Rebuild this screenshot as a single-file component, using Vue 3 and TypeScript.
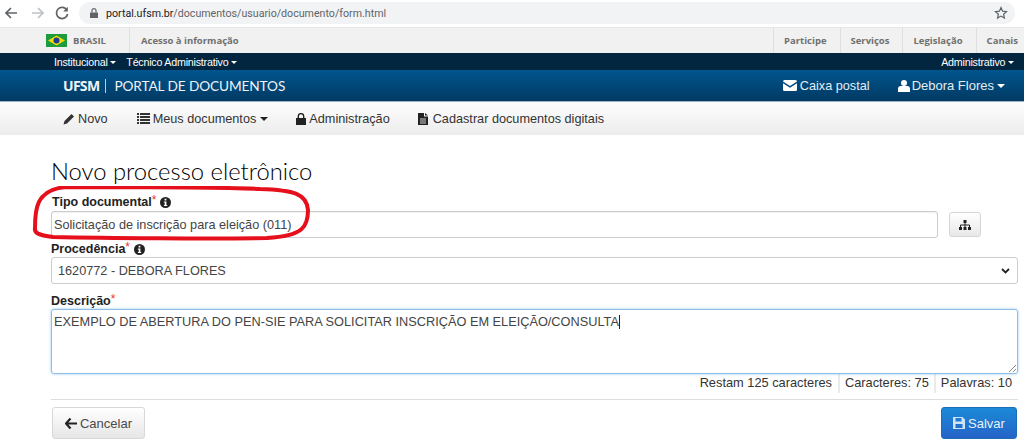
<script setup lang="ts">
const topLinks: string[] = ['Participe', 'Serviços', 'Legislação', 'Canais']
const counters: string[] = ['Restam 125 caracteres', 'Caracteres: 75', 'Palavras: 10']
</script>

<template>
  <div class="page">
    <header class="chrome">
      <svg class="ci" width="16" height="16" viewBox="0 0 16 16"><path d="M14 8H3M8 3L3 8l5 5" fill="none" stroke="#5f6368" stroke-width="1.7"/></svg>
      <svg class="ci fwd" width="16" height="16" viewBox="0 0 16 16"><path d="M2 8h11M8 3l5 5-5 5" fill="none" stroke="#bdc1c6" stroke-width="1.7"/></svg>
      <svg class="ci reload" width="16" height="16" viewBox="0 0 16 16"><path d="M13 5.2A5.6 5.6 0 1 0 13.6 9" fill="none" stroke="#5f6368" stroke-width="1.7"/><path d="M13.8 1.8v4.6H9.2z" fill="#5f6368"/></svg>
      <div class="omni">
        <svg width="10" height="12" viewBox="0 0 10 12"><path d="M1 5.5h8V11H1z" fill="#5f6368"/><path d="M3 5.5V3.6a2 2 0 0 1 4 0v1.9" fill="none" stroke="#5f6368" stroke-width="1.2"/></svg>
        <span class="url"><b>portal.ufsm.br</b>/documentos/usuario/documento/form.html</span>
        <svg class="star" width="14" height="14" viewBox="0 0 14 14"><path d="M7 1.6l1.6 3.6 3.9.4-2.9 2.6.8 3.9L7 10.1l-3.4 2 .8-3.9L1.500 5.600l3.900-.4z" fill="none" stroke="#5f6368" stroke-width="1.2"/></svg>
      </div>
    </header>

    <div class="gov">
      <div class="brasil">
        <svg width="21" height="13" viewBox="0 0 21 13"><rect width="21" height="13" fill="#1c9c3c"/><path d="M10.500 1.500L19 6.500l-8.500 5-8.500-5z" fill="#f5d90a"/><circle cx="10.500" cy="6.500" r="3" fill="#1d3d8f"/></svg>
        <span>BRASIL</span>
      </div>
      <span class="acesso">Acesso à informação</span>
      <nav class="gov-links">
        <a v-for="l in topLinks" :key="l">{{ l }}</a>
      </nav>
    </div>

    <div class="dark">
      <span class="dd">Institucional <i class="caret small"></i></span>
      <span class="dd">Técnico Administrativo <i class="caret small"></i></span>
      <span class="dd end">Administrativo <i class="caret small"></i></span>
    </div>

    <div class="blue">
      <div class="brand"><strong>UFSM</strong><em></em><span>PORTAL DE DOCUMENTOS</span></div>
      <div class="blue-right">
        <span class="bi">
          <svg width="14" height="11" viewBox="0 0 14 11"><path d="M0 1.500Q0 0 1.500 0h11Q14 0 14 1.500L7 6z" fill="#fff"/><path d="M0 3.200L7 7.800l7-4.600v6.300q0 1.500-1.500 1.500h-11Q0 11 0 9.500z" fill="#fff"/></svg>
          Caixa postal
        </span>
        <span class="bi user">
          <svg width="12" height="12" viewBox="0 0 12 12"><circle cx="6" cy="3" r="3" fill="#fff"/><path d="M0 12V9q0-3 3-3h6q3 0 3 3v3z" fill="#fff"/></svg>
          Debora Flores <i class="caret"></i>
        </span>
      </div>
    </div>

    <nav class="menu">
      <a class="m1">
        <svg width="12" height="12" viewBox="0 0 12 12"><path d="M8.500 1l2.500 2.500L4 10.500 0.500 11.500 1.500 8z" fill="#333"/></svg>
        Novo
      </a>
      <a class="m2">
        <svg width="13" height="11" viewBox="0 0 13 11"><path d="M0 0h2v2H0zM3 0h10v2H3zM0 3h2v2H0zM3 3h10v2H3zM0 6h2v2H0zM3 6h10v2H3zM0 9h2v2H0zM3 9h10v2H3z" fill="#333"/></svg>
        Meus documentos <i class="caret dark-caret"></i>
      </a>
      <a class="m3">
        <svg width="10" height="12" viewBox="0 0 10 12"><path d="M0 5h10v7H0z" fill="#222"/><path d="M2.300 5V3.300a2.700 2.700 0 0 1 5.400 0V5" fill="none" stroke="#222" stroke-width="1.400"/></svg>
        Administração
      </a>
      <a class="m4">
        <svg width="10" height="12" viewBox="0 0 10 12"><path d="M0 0h6v3.500h4V12H0z" fill="#222"/><path d="M7 0l3 2.600H7z" fill="#222"/><path d="M2 6h6M2 8h6M2 10h6" stroke="#fff" stroke-width=".8"/></svg>
        Cadastrar documentos digitais
      </a>
    </nav>

    <main class="content">
      <h1>Novo processo eletrônico</h1>

      <label class="lbl first">Tipo documental<sup>*</sup>
        <svg class="info" width="11" height="11" viewBox="0 0 11 11"><circle cx="5.500" cy="5.500" r="5.500" fill="#222"/><path d="M4.600 1.800h1.800v1.600H4.600zM3.900 4.400h2.500v3.500h.8v1.200H3.900V7.900h.8V5.600h-.8z" fill="#fff"/></svg>
      </label>
      <div class="row">
        <div class="field">Solicitação de inscrição para eleição (011)</div>
        <button class="tree" type="button">
          <svg width="12" height="10" viewBox="0 0 12 10"><path d="M4.500 0h3v3h-3zM0 7h3v3H0zM4.500 7h3v3h-3zM9 7h3v3H9z" fill="#222"/><path d="M6 3v4M1.500 7V5h9v2" fill="none" stroke="#222"/></svg>
        </button>
      </div>

      <label class="lbl second">Procedência<sup>*</sup>
        <svg class="info" width="11" height="11" viewBox="0 0 11 11"><circle cx="5.500" cy="5.500" r="5.500" fill="#222"/><path d="M4.600 1.800h1.800v1.600H4.600zM3.900 4.400h2.500v3.500h.8v1.200H3.900V7.900h.8V5.600h-.8z" fill="#fff"/></svg>
      </label>
      <div class="select">
        <span>1620772 - DEBORA FLORES</span>
        <svg width="9" height="6" viewBox="0 0 9 6"><path d="M1 1l3.500 3.500L8 1" fill="none" stroke="#222" stroke-width="1.800"/></svg>
      </div>

      <label class="lbl third">Descrição<sup>*</sup></label>
      <div class="area">
        <span>EXEMPLO DE ABERTURA DO PEN-SIE PARA SOLICITAR INSCRIÇÃO EM ELEIÇÃO/CONSULTA</span><i class="cursor"></i>
        <svg class="grip" width="8" height="8" viewBox="0 0 8 8"><path d="M1 8l7-7M5 8l3-3" stroke="#888" fill="none"/></svg>
      </div>
      <div class="counters">
        <span v-for="c in counters" :key="c">{{ c }}</span>
      </div>

      <hr />

      <div class="actions">
        <button class="btn cancel" type="button">
          <svg width="12" height="11" viewBox="0 0 12 11"><path d="M5.500 0.500L1 5.500l4.500 5M1.500 5.500H12" fill="none" stroke="#222" stroke-width="2.200"/></svg>
          Cancelar
        </button>
        <button class="btn save" type="button">
          <svg width="12" height="12" viewBox="0 0 12 12"><path d="M0 0h9.500L12 2.500V12H0zM2.500 1v3.500h6V1zM2.500 7v4h7V7z" fill="#cfe3f7" fill-rule="evenodd"/></svg>
          Salvar
        </button>
      </div>

      <svg class="ring" width="280" height="56" viewBox="0 0 280 56">
        <path d="M35 1C100 1 190 1 228 3C262 4 275 8 276 24C276 40 272 50 235 52C180 53 70 52 21 51C6 49 2 47 3 42C3 25 3 3 35 1z" fill="none" stroke="#e5101c" stroke-width="4"/>
      </svg>
    </main>
  </div>
</template>

<style scoped>
.page {
  width: 1024px;
  height: 445px;
  overflow: hidden;
  background: #fff;
  font-family: "Liberation Sans", Arial, sans-serif;
  color: #333;
}
.chrome {
  height: 27px;
  display: flex;
  align-items: center;
  padding-left: 3px;
  padding-bottom: 1px;
  background: #fff;
  box-sizing: border-box;
}
.ci { flex: none; }
.fwd { margin-left: 11px; }
.reload { margin-left: 8px; }
.omni {
  margin-left: 9px;
  width: 936px;
  height: 22px;
  border-radius: 11px;
  background: #f1f3f4;
  display: flex;
  align-items: center;
  padding-left: 10px;
  padding-right: 7px;
  box-sizing: border-box;
}
.url {
  margin-left: 7px;
  font-size: 10.650px;
  color: #5f6368;
  font-family: "Roboto", sans-serif;
}
.url b { font-weight: 400; color: #202124; }
.star { margin-left: auto; }

.gov {
  height: 26px;
  display: flex;
  align-items: center;
  background: #f1f1f1;
  box-sizing: border-box;
  border-top: 1px solid #e6e6e6;
  font-family: "Open Sans", sans-serif;
  font-weight: 700;
  font-size: 9.500px;
  color: #6f6f6f;
}
.brasil {
  width: 130px;
  height: 100%;
  padding-left: 46px;
  box-sizing: border-box;
  display: flex;
  align-items: center;
  gap: 6px;
  border-right: 1px solid #dfdfdf;
}
.acesso { margin-left: 11px; }
.gov-links { margin-left: auto; display: flex; height: 100%; }
.gov-links a {
  display: flex;
  align-items: center;
  padding: 0 13px 0 10px;
  border-left: 1px solid #dfdfdf;
}
.gov-links a:last-child { padding-right: 6px; }

.dark {
  height: 17px;
  background: #02263f;
  display: flex;
  align-items: center;
  padding: 0 10px 0 54px;
  color: #fff;
  font-size: 10.700px;
  letter-spacing: -0.220px;
}
.dd { margin-right: 10px; white-space: nowrap; }
.dd.end { margin: 0 0 0 auto; }

.caret {
  display: inline-block;
  width: 0;
  height: 0;
  border-left: 4px solid transparent;
  border-right: 4px solid transparent;
  border-top: 4px solid #fff;
  vertical-align: 2px;
  margin-left: 1px;
}
.caret.small { border-width: 3px 3px 0; margin-left: 0; vertical-align: 1.500px; }
.caret.dark-caret { border-top-color: #222; }

.blue {
  height: 32px;
  background: linear-gradient(#00558e, #023a63);
  display: flex;
  align-items: center;
  padding: 0 19px 0 63px;
  color: #fff;
  box-sizing: border-box;
  border-bottom: 1px solid #9fb6c6;
}
.brand {
  display: flex;
  align-items: center;
  font-family: "Lato", sans-serif;
  font-size: 13.650px;
  color: #eef3f7;
}
.brand strong { font-family: "Open Sans", sans-serif; font-weight: 700; font-size: 14px; letter-spacing: -0.700px; }
.brand em { width: 1px; height: 14px; background: #b9cede; margin: 0 8px 0 6px; }
.brand span { letter-spacing: -0.100px; }
.blue-right { margin-left: auto; display: flex; align-items: center; font-size: 12.700px; color: #e4edf3; }
.bi { display: inline-flex; align-items: center; gap: 3px; white-space: nowrap; }
.user { margin-left: 28px; font-size: 13px; gap: 2px; }
.user .caret { margin-left: 1px; vertical-align: 0; }

.menu {
  height: 33px;
  background: linear-gradient(#fefefe, #ececec);
  display: flex;
  align-items: center;
  padding-left: 63px;
  font-size: 12.700px;
  color: #333;
  box-sizing: border-box;
}
.menu a { display: inline-flex; align-items: center; gap: 3px; white-space: nowrap; }
.menu .caret { margin-left: 1px; }
.m2 { margin-left: 29px; }
.m3 { margin-left: 28px; }
.m4 { margin-left: 28px; gap: 5px !important; }

.content {
  position: relative;
  padding: 0 7px 0 51px;
  box-sizing: border-box;
  height: 310px;
}
h1 {
  margin: 0;
  padding-top: 21px;
  font-family: "Lato", sans-serif;
  font-weight: 300;
  font-size: 23.800px;
  line-height: 30px;
  color: #000;
  height: 58px;
  box-sizing: border-box;
}
.lbl {
  display: flex;
  align-items: center;
  font-weight: 700;
  font-size: 12.500px;
  line-height: 14px;
  color: #222;
}
.lbl sup {
  color: #e33;
  font-weight: 400;
  font-size: 12px;
  line-height: 0;
  position: relative;
  top: -2px;
}
.info { margin-left: 4px; }
.first { margin-top: 2px; padding-left: 1px; }
.row { display: flex; margin-top: 2px; }
.field {
  width: 887px;
  height: 27px;
  border: 1px solid #ccc;
  border-radius: 3px;
  box-sizing: border-box;
  box-shadow: inset 0 1px 1px rgba(0,0,0,.06);
  font-size: 12.700px;
  line-height: 26px;
  padding-left: 2px;
  color: #444;
}
.tree {
  margin-left: 11px;
  width: 32px;
  height: 25px;
  margin-top: 1px;
  border: 1px solid #d5d5d5;
  border-radius: 3px;
  background: linear-gradient(#fff, #e8e8e8);
  display: flex;
  align-items: center;
  justify-content: center;
  padding: 0;
}
.second { margin-top: 4px; }
.select {
  margin-top: 1px;
  width: 967px;
  height: 27px;
  border: 1px solid #ccc;
  border-radius: 3px;
  box-sizing: border-box;
  display: flex;
  align-items: center;
  justify-content: space-between;
  padding: 0 7px 0 6px;
  font-size: 12.700px;
  color: #444;
}
.third { margin-top: 10px; }
.area {
  position: relative;
  margin-top: 1px;
  width: 967px;
  height: 65px;
  border: 1px solid #8fbde6;
  border-radius: 3px;
  box-shadow: 0 0 3px rgba(82,168,236,.6);
  box-sizing: border-box;
  padding: 4px 2px;
  font-size: 12.760px;
  line-height: 15px;
  color: #444;
}
.cursor {
  display: inline-block;
  width: 1px;
  height: 14px;
  background: #222;
  vertical-align: -3px;
}
.grip { position: absolute; right: 1px; bottom: 1px; }
.counters {
  width: 967px;
  display: flex;
  justify-content: flex-end;
  font-size: 12.800px;
  height: 19px;
  line-height: 17px;
  color: #333;
}
.counters span { padding: 0 5px; border-left: 2px solid #eaeaea; }
.counters span:first-child { border-left: 0; padding-right: 6px; }
.counters span:last-child { padding-right: 6px; }
hr {
  width: 967px;
  margin: 6px 0 0;
  border: 0;
  border-top: 1px solid #ddd;
}
.actions {
  width: 966px;
  margin-top: 7px;
  display: flex;
  justify-content: space-between;
  padding-left: 1px;
  box-sizing: border-box;
}
.btn {
  height: 32px;
  border-radius: 3px;
  display: inline-flex;
  align-items: center;
  justify-content: center;
  gap: 3px;
  font-family: "Liberation Sans", Arial, sans-serif;
  font-size: 13px;
  padding: 0;
}
.cancel {
  width: 93px;
  border: 1px solid #d8d8d8;
  background: linear-gradient(#fff, #e6e6e6);
  color: #4a4a4a;
}
.save {
  width: 76px;
  border: 1px solid #1b6fb5;
  background: linear-gradient(#1b8ad6, #2563c9);
  color: #e8f1fa;
}
.ring {
  position: absolute;
  left: 32px;
  top: 51px;
  pointer-events: none;
}
</style>
